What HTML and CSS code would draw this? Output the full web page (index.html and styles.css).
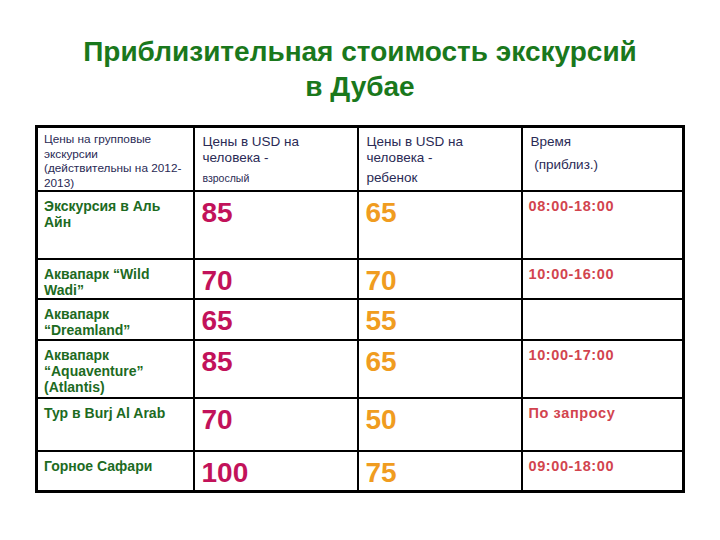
FILE: index.html
```html
<!DOCTYPE html>
<html>
<head>
<meta charset="utf-8">
<link rel="stylesheet" href="styles.css">
</head>
<body>
<h1 class="title">Приблизительная стоимость экскурсий<br>в Дубае</h1>
<table class="prices">
<colgroup>
<col class="c1"><col class="c2"><col class="c3"><col class="c4">
</colgroup>
<tr class="head">
<td class="h1">Цены на групповые<br>экскурсии<br>(действительны на 2012-<br>2013)</td>
<td class="h2">Цены в USD на<br>человека -<span class="l3 small">взрослый</span></td>
<td class="h3">Цены в USD на<br>человека -<span class="l3">ребенок</span></td>
<td class="h4">Время<span class="l2">&nbsp;(приблиз.)</span></td>
</tr>
<tr class="r1">
<td class="name">Экскурсия в Аль<br>Айн</td><td class="adult">85</td><td class="child">65</td><td class="time">08:00-18:00</td>
</tr>
<tr class="r2">
<td class="name">Аквапарк “Wild<br>Wadi”</td><td class="adult">70</td><td class="child">70</td><td class="time">10:00-16:00</td>
</tr>
<tr class="r3">
<td class="name">Аквапарк<br>“Dreamland”</td><td class="adult">65</td><td class="child">55</td><td class="time"></td>
</tr>
<tr class="r4">
<td class="name">Аквапарк<br>“Aquaventure”<br>(Atlantis)</td><td class="adult">85</td><td class="child">65</td><td class="time">10:00-17:00</td>
</tr>
<tr class="r5">
<td class="name">Тур в Burj Al Arab</td><td class="adult">70</td><td class="child">50</td><td class="time">По запросу</td>
</tr>
<tr class="r6">
<td class="name">Горное Сафари</td><td class="adult">100</td><td class="child">75</td><td class="time">09:00-18:00</td>
</tr>
</table>
</body>
</html>
```
FILE: styles.css
```css
html, body {
  margin: 0;
  padding: 0;
  background: #ffffff;
}
body {
  font-family: "Liberation Sans", Arial, sans-serif;
  width: 720px;
  height: 540px;
  overflow: hidden;
}
.title {
  margin: 0;
  padding-top: 34px;
  height: 90px;
  box-sizing: border-box;
  text-align: center;
  font-size: 28px;
  line-height: 35px;
  font-weight: bold;
  color: #1a781c;
}
.prices {
  margin-left: 35px;
  margin-top: 35px;
  border-collapse: collapse;
  table-layout: fixed;
  width: 650px;
  border: 3px solid #000;
}
.c1 { width: 157px; }
.c2 { width: 164px; }
.c3 { width: 164px; }
.c4 { width: 162px; }
.prices td {
  border: 2px solid #000;
  vertical-align: top;
  padding: 0;
}
.head td {
  color: #2a2a55;
}
.h1 {
  font-size: 11.8px;
  line-height: 14.6px;
  padding: 4px 6px 0 6px !important;
}
.h2, .h3, .h4 {
  font-size: 13.5px;
  line-height: 16px;
  padding: 6px 8px 0 8px !important;
}
.l3 { display: block; margin-top: 4px; }
.l2 { display: block; margin-top: 7px; }
.small { font-size: 10.5px; }
.name {
  color: #1d6b1f;
  font-weight: bold;
  font-size: 14px;
  line-height: 16px;
  padding: 6px 6px 0 6px !important;
}
.adult, .child {
  font-weight: bold;
  font-size: 28px;
  line-height: 32px;
  padding: 5px 7px 0 7px !important;
}
.adult { color: #c2125a; }
.child { color: #f09c20; }
.time {
  color: #d2444e;
  font-weight: bold;
  font-size: 14.5px;
  letter-spacing: 0.6px;
  line-height: 16px;
  padding: 6px 6px 0 6px !important;
}
.head { height: 63px; }
.r1 { height: 68px; }
.r2 { height: 40px; }
.r3 { height: 41px; }
.r4 { height: 58px; }
.r5 { height: 53px; }
.r6 { height: 40px; }
```
